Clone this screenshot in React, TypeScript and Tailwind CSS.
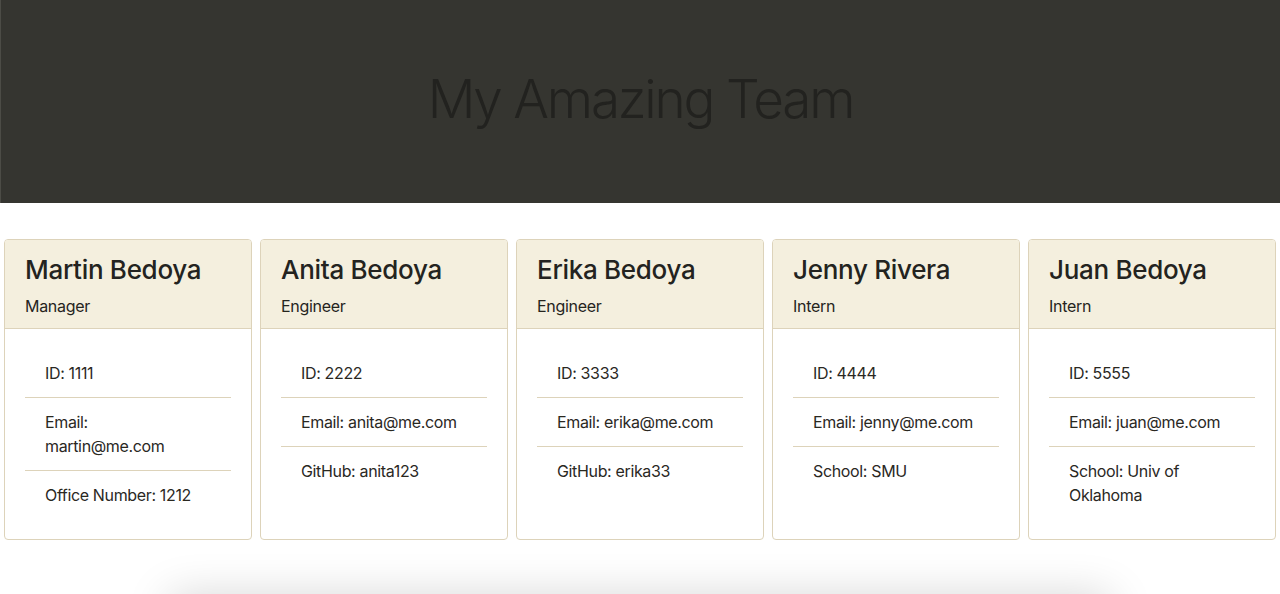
import React from "react";

type Member = {
  name: string;
  role: string;
  id: string;
  email: string;
  extra: string;
};

const team: Member[] = [
  { name: "Martin Bedoya", role: "Manager", id: "1111", email: "martin@me.com", extra: "Office Number: 1212" },
  { name: "Anita Bedoya", role: "Engineer", id: "2222", email: "anita@me.com", extra: "GitHub: anita123" },
  { name: "Erika Bedoya", role: "Engineer", id: "3333", email: "erika@me.com", extra: "GitHub: erika33" },
  { name: "Jenny Rivera", role: "Intern", id: "4444", email: "jenny@me.com", extra: "School: SMU" },
  { name: "Juan Bedoya", role: "Intern", id: "5555", email: "juan@me.com", extra: "School: Univ of Oklahoma" },
];

const MemberCard = ({ member }: { member: Member }) => {
  return (
    <div className="flex flex-col rounded-[4px] border border-[#ddd3ba] bg-white overflow-hidden">
      <div className="bg-[#f4efde] border-b border-[#ddd3ba] px-5 pt-[14px] pb-[10px]">
        <h3 className="text-[26px] leading-[32px] font-medium tracking-[-0.3px] text-[#232320] mb-2">{member.name}</h3>
        <p className="text-base leading-6 tracking-[-0.3px] text-[#25241d]">{member.role}</p>
      </div>
      <div className="p-5 flex-1">
        <ul className="text-base leading-6 tracking-[-0.35px] text-[#2a281f]">
          <li className="px-5 py-3 border-b border-[#ddd3ba]">ID: {member.id}</li>
          <li className="px-5 py-3 border-b border-[#ddd3ba]">Email: {member.email}</li>
          <li className="px-5 py-3">{member.extra}</li>
        </ul>
      </div>
    </div>
  );
};

export default function App() {
  return (
    <div className="min-h-[594px] bg-white font-['Inter','Noto_Sans',sans-serif] overflow-hidden">
      <header className="h-[203px] bg-[#353530] border-l border-[#4c4c46] flex items-center justify-center">
        <h1 className="text-[53px] font-light text-[#22221f] tracking-[-2.2px] -mt-1">My Amazing Team</h1>
      </header>
      <main className="grid grid-cols-5 gap-2 px-1 pt-9">
        {team.map((member) => (
          <MemberCard key={member.id} member={member} />
        ))}
      </main>
      <div className="mx-auto mt-[57px] w-[940px] h-10 bg-white shadow-[0_0_45px_rgba(0,0,0,0.18)]" />
    </div>
  );
}
